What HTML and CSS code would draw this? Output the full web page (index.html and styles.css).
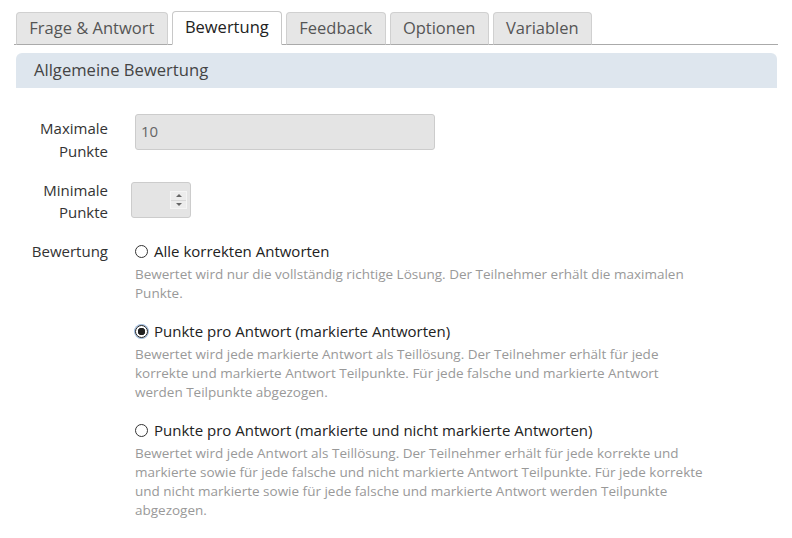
FILE: index.html
```html
<!DOCTYPE html>
<html lang="de">
<head>
<meta charset="utf-8">
<link rel="stylesheet" href="styles.css">
</head>
<body>
<div class="page">
  <ul class="tabs">
    <li class="tab">Frage &amp; Antwort</li>
    <li class="tab active">Bewertung</li>
    <li class="tab">Feedback</li>
    <li class="tab">Optionen</li>
    <li class="tab">Variablen</li>
  </ul>
  <div class="section-head">Allgemeine Bewertung</div>
  <div class="form">
    <div class="row row-max">
      <div class="label">Maximale<br>Punkte</div>
      <div class="control"><div class="input input-wide">10</div></div>
    </div>
    <div class="row row-min">
      <div class="label">Minimale<br>Punkte</div>
      <div class="control">
        <div class="input input-small">
          <span class="spin"><span class="up"></span><span class="down"></span></span>
        </div>
      </div>
    </div>
    <div class="row row-radio">
      <div class="label">Bewertung</div>
      <div class="control options">
        <div class="option">
          <div class="opt-title"><span class="radio"></span>Alle korrekten Antworten</div>
          <div class="opt-desc">Bewertet wird nur die vollständig richtige Lösung. Der Teilnehmer erhält die maximalen<br>Punkte.</div>
        </div>
        <div class="option">
          <div class="opt-title"><span class="radio checked"></span>Punkte pro Antwort (markierte Antworten)</div>
          <div class="opt-desc">Bewertet wird jede markierte Antwort als Teillösung. Der Teilnehmer erhält für jede<br>korrekte und markierte Antwort Teilpunkte. Für jede falsche und markierte Antwort<br>werden Teilpunkte abgezogen.</div>
        </div>
        <div class="option">
          <div class="opt-title"><span class="radio"></span>Punkte pro Antwort (markierte und nicht markierte Antworten)</div>
          <div class="opt-desc">Bewertet wird jede Antwort als Teillösung. Der Teilnehmer erhält für jede korrekte und<br>markierte sowie für jede falsche und nicht markierte Antwort Teilpunkte. Für jede korrekte<br>und nicht markierte sowie für jede falsche und markierte Antwort werden Teilpunkte<br>abgezogen.</div>
        </div>
      </div>
    </div>
  </div>
</div>
</body>
</html>
```
FILE: styles.css
```css
* { box-sizing: border-box; }
html, body { margin: 0; padding: 0; background: #fff; }
body {
  font-family: "Open Sans", "DejaVu Sans", sans-serif;
  color: #333;
  font-size: 15px;
}
.page { padding: 11px 14px 0 14px; width: 792px; }

.tabs {
  list-style: none;
  margin: 0;
  padding: 0 0 0 2px;
  display: flex;
  gap: 4px;
  border-bottom: 1px solid #aaa;
  height: 34px;
  align-items: flex-end;
}
.tab {
  height: 33px;
  margin-bottom: -1px;
  padding: 0 12.3px;
  font-size: 16.5px;
  line-height: 30px;
  color: #555;
  background: #e6e6e6;
  border: 1px solid #d0d0d0;
  border-bottom: 1px solid #aaa;
  border-radius: 4px 4px 0 0;
}
.tab.active {
  background: #fff;
  color: #222;
  border-color: #c8c8c8;
  border-bottom-color: #fff;
  height: 34px;
}

.section-head {
  margin: 8px 1px 0 2px;
  height: 35px;
  background: #dee6ee;
  border-radius: 6px 6px 0 0;
  padding-left: 18px;
  font-size: 16.6px;
  line-height: 34px;
  color: #444;
}

.form { padding-top: 26px; }
.row { display: flex; }
.label {
  width: 94px;
  text-align: right;
  font-size: 15px;
  line-height: 23px;
  color: #333;
}
.control { flex: 1; }
.row-max .label { padding-top: 3px; }
.row-max .control { padding-left: 27px; }
.row-min { margin-top: 19px; }
.row-min .label { margin-top: -3px; line-height: 22px; }
.row-min .control { padding-left: 23px; }
.row-radio { margin-top: 16px; }
.row-radio .label { padding-top: 1px; }
.options { padding-left: 27px; }

.input {
  background: #e4e4e4;
  border: 1px solid #ccc;
  border-radius: 3px;
  height: 36px;
  color: #666;
  font-size: 15px;
  line-height: 33px;
  padding-left: 5px;
}
.input-wide { width: 300px; }
.input-small {
  width: 60px;
  display: flex;
  align-items: center;
  justify-content: flex-end;
  padding-right: 3px;
}
.spin {
  display: flex;
  flex-direction: column;
  width: 17px;
  height: 18px;
  background: #ececec;
  border: 1px solid #f4f4f4;
}
.spin .up, .spin .down {
  flex: 1;
  display: flex;
  align-items: center;
  justify-content: center;
}
.spin .up { border-bottom: 1px solid #d8d8d8; }
.spin .up::after {
  content: "";
  border-left: 3px solid transparent;
  border-right: 3px solid transparent;
  border-bottom: 3px solid #666;
}
.spin .down::after {
  content: "";
  border-left: 3px solid transparent;
  border-right: 3px solid transparent;
  border-top: 3px solid #666;
}

.option { margin-bottom: 16px; }
.opt-title {
  font-size: 15px;
  line-height: 22px;
  color: #222;
  display: flex;
  align-items: center;
  padding-top: 1px;
}
.radio {
  width: 13px;
  height: 13px;
  border: 1px solid #333;
  border-radius: 50%;
  margin-right: 6px;
  flex: none;
  background: #fff;
}
.radio.checked {
  border-color: #222;
  background: radial-gradient(circle, #222 0 3.5px, #fff 4px);
  box-shadow: 0 0 0 1px #9cbbe0;
}
.opt-desc {
  font-size: 13.5px;
  line-height: 19px;
  color: #999;
  white-space: nowrap;
  margin-top: 3px;
}
```
